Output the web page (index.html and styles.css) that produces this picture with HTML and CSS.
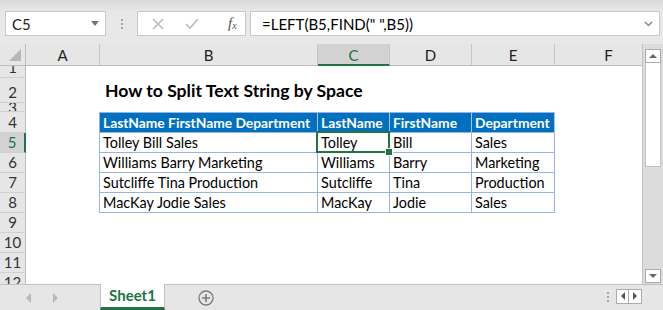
FILE: index.html
```html
<!DOCTYPE html>
<html lang="en">
<head>
    <meta charset="UTF-8">
    <title>How to Split Text String by Space</title>
    <link rel="stylesheet" href="styles.css">
</head>
<body>
    <div class="toolbar">
        <div class="namebox">
            <span>C5</span>
            <span class="caret"></span>
        </div>
        <div class="grip"><i></i><i></i><i></i></div>
        <div class="fxbox">
            <svg width="12" height="12" viewBox="0 0 12 12" class="icon-x">
                <path d="M1 1 L11 11 M11 1 L1 11" stroke="#b8b8b8" stroke-width="1.5" fill="none"/>
            </svg>
            <svg width="14" height="12" viewBox="0 0 14 12" class="icon-check">
                <path d="M1 6 L5 10 L13 1" stroke="#b8b8b8" stroke-width="1.6" fill="none"/>
            </svg>
            <span class="fx">f<sub>x</sub></span>
        </div>
        <div class="formula">
            <span>=LEFT(B5,FIND(" ",B5))</span>
            <svg width="9" height="6" viewBox="0 0 9 6" class="chevron">
                <path d="M1 1 L4.5 4.5 L8 1" stroke="#888" stroke-width="1.5" fill="none"/>
            </svg>
        </div>
    </div>

    <div class="main">
        <div class="sheet">
            <div class="row colhead">
                <div class="rh corner"><span class="tri"></span></div>
                <div class="ch a">A</div>
                <div class="ch b">B</div>
                <div class="ch c active">C</div>
                <div class="ch d">D</div>
                <div class="ch e">E</div>
                <div class="ch f">F</div>
            </div>
            <div class="row r1"><div class="rh">1</div></div>
            <div class="row r2">
                <div class="rh">2</div>
                <div class="cell a"></div>
                <div class="cell b title">How to Split Text String by Space</div>
            </div>
            <div class="row r3"><div class="rh">3</div></div>
            <div class="row r4">
                <div class="rh">4</div>
                <div class="cell a"></div>
                <div class="cell b tb th first">LastName FirstName Department</div>
                <div class="cell c tb th">LastName</div>
                <div class="cell d tb th">FirstName</div>
                <div class="cell e tb th">Department</div>
            </div>
            <div class="row r5">
                <div class="rh active">5</div>
                <div class="cell a"></div>
                <div class="cell b tb first">Tolley Bill Sales</div>
                <div class="cell c tb selected">Tolley</div>
                <div class="cell d tb">Bill</div>
                <div class="cell e tb">Sales</div>
            </div>
            <div class="row r6">
                <div class="rh">6</div>
                <div class="cell a"></div>
                <div class="cell b tb first">Williams Barry Marketing</div>
                <div class="cell c tb">Williams</div>
                <div class="cell d tb">Barry</div>
                <div class="cell e tb">Marketing</div>
            </div>
            <div class="row r7">
                <div class="rh">7</div>
                <div class="cell a"></div>
                <div class="cell b tb first">Sutcliffe Tina Production</div>
                <div class="cell c tb">Sutcliffe</div>
                <div class="cell d tb">Tina</div>
                <div class="cell e tb">Production</div>
            </div>
            <div class="row r8">
                <div class="rh">8</div>
                <div class="cell a"></div>
                <div class="cell b tb first">MacKay Jodie Sales</div>
                <div class="cell c tb">MacKay</div>
                <div class="cell d tb">Jodie</div>
                <div class="cell e tb">Sales</div>
            </div>
            <div class="row r9"><div class="rh">9</div></div>
            <div class="row r10"><div class="rh">10</div></div>
            <div class="row r11"><div class="rh">11</div></div>
            <div class="row r12"><div class="rh">12</div></div>
        </div>

        <div class="vscroll">
            <div class="sbtn"><span class="up"></span></div>
            <div class="thumb"></div>
            <div class="track"></div>
            <div class="sbtn"><span class="down"></span></div>
        </div>
    </div>

    <div class="tabbar">
        <div class="tabnav">
            <span class="left"></span>
            <span class="right"></span>
        </div>
        <div class="tab">Sheet1</div>
        <svg width="16" height="16" viewBox="0 0 16 16" class="addsheet">
            <circle cx="8" cy="8" r="7" stroke="#7a7a7a" stroke-width="1.3" fill="none"/>
            <path d="M8 4 V12 M4 8 H12" stroke="#7a7a7a" stroke-width="1.6"/>
        </svg>
        <div class="spacer"></div>
        <div class="grip small"><i></i><i></i><i></i></div>
        <div class="hnav">
            <div class="nbtn"><span class="left"></span></div>
            <div class="nbtn"><span class="right"></span></div>
        </div>
    </div>
</body>
</html>
```

FILE: styles.css
```css
* {
    box-sizing: border-box;
}

body {
    margin: 0;
    width: 663px;
    height: 310px;
    overflow: hidden;
    background: #e6e6e6;
    font-family: Lato, "Open Sans", sans-serif;
    font-size: 15px;
    color: #000;
}

/* formula bar */
.toolbar {
    height: 44px;
    display: flex;
    align-items: flex-start;
    padding: 11px 0 0 5px;
    background: linear-gradient(#d9d9d9, #e8e8e8 12px, #e8e8e8);
}

.namebox {
    width: 101px;
    height: 25px;
    background: #fff;
    border: 1px solid #c9c9c9;
    display: flex;
    align-items: center;
    justify-content: space-between;
    padding: 0 6px 0 6px;
    color: #222;
}

.caret {
    border-top: 5px solid #777;
    border-left: 4px solid transparent;
    border-right: 4px solid transparent;
}

.grip {
    width: 31px;
    height: 25px;
    display: flex;
    flex-direction: column;
    align-items: center;
    justify-content: center;
    gap: 2px;
}

.grip i {
    display: block;
    width: 2px;
    height: 2px;
    background: #a6a6a6;
}

.fxbox {
    width: 109px;
    height: 25px;
    background: #fff;
    border: 1px solid #c9c9c9;
    display: flex;
    align-items: center;
    padding-left: 14px;
}

.icon-check {
    margin-left: 21px;
}

.fx {
    margin-left: 29px;
    font-family: "Liberation Serif", serif;
    font-style: italic;
    font-size: 15px;
    color: #555;
}

.fx sub {
    font-size: 10px;
    vertical-align: -1px;
}

.formula {
    width: 410px;
    height: 25px;
    margin-left: 4px;
    background: #fff;
    border: 1px solid #c9c9c9;
    display: flex;
    align-items: center;
    justify-content: space-between;
    padding: 0 6px 0 11px;
}

/* grid */
.main {
    display: flex;
    height: 240px;
}

.sheet {
    width: 643px;
    background: #fff;
    border-right: 1px solid #c2c2c2;
    overflow: hidden;
    display: flex;
    flex-direction: column;
}

.row {
    display: flex;
    height: 20px;
    flex: none;
}

.colhead { height: 22px; }
.r1 { height: 12px; }
.r2 { height: 25px; }
.r3 { height: 9px; }
.r4 { height: 21px; }
.r12 { flex: 1; }

.rh {
    width: 26px;
    flex: none;
    background: #e6e6e6;
    border-right: 1px solid #bdbdbd;
    border-bottom: 1px solid #d0d0d0;
    color: #333;
    display: flex;
    justify-content: center;
    align-items: flex-end;
    line-height: 19px;
    overflow: hidden;
}

.r3 .rh,
.r12 .rh {
    align-items: center;
}

.rh.active {
    background: #d2d2d2;
    color: #217346;
    border-right: 2px solid #217346;
}

.a { width: 74px; }
.b { width: 218px; }
.c { width: 72px; }
.d { width: 82px; }
.e { width: 83px; }
.f { width: 108px; }

.ch {
    flex: none;
    background: #e6e6e6;
    border-right: 1px solid #c6c6c6;
    border-bottom: 1px solid #bdbdbd;
    text-align: center;
    line-height: 22px;
    color: #222;
}

.ch.active {
    background: #d2d2d2;
    color: #217346;
    border-bottom: 2px solid #217346;
}

.corner {
    position: relative;
    border-bottom: 1px solid #bdbdbd;
}

.corner .tri {
    position: absolute;
    right: 4px;
    bottom: 4px;
    border-left: 12px solid transparent;
    border-bottom: 12px solid #b7b7b7;
}

.cell {
    flex: none;
    padding: 0 3px;
    white-space: nowrap;
    font-size: 14.4px;
    line-height: 19px;
}

.title {
    overflow: visible;
    font-weight: bold;
    font-size: 17.6px;
    line-height: 25px;
    padding-left: 5px;
}

.tb {
    border-right: 1px solid #95b3e3;
    border-bottom: 1px solid #95b3e3;
}

.tb.first {
    border-left: 1px solid #95b3e3;
    margin-left: -1px;
    width: 219px;
}

.th {
    background: #0070c0;
    color: #fff;
    font-weight: bold;
    font-size: 13.8px;
    border-top: 1px solid #95b3e3;
    border-right-color: #a9c3ea;
}

.selected {
    position: relative;
}

.selected::after {
    content: "";
    position: absolute;
    left: -2px;
    top: -2px;
    right: -1px;
    bottom: -1px;
    border: 2px solid #217346;
}

.selected::before {
    content: "";
    position: absolute;
    right: -4px;
    bottom: -4px;
    width: 6px;
    height: 6px;
    background: #217346;
    border: 1px solid #fff;
    z-index: 1;
}

/* vertical scroll bar */
.vscroll {
    flex: 1;
    display: flex;
    flex-direction: column;
    padding: 5px 2px 1px 2px;
    background: #dcdcdc;
}

.sbtn {
    height: 14px;
    background: #fff;
    border: 1px solid #ababab;
    display: flex;
    align-items: center;
    justify-content: center;
}

.sbtn .up {
    border-bottom: 4px solid #666;
    border-left: 4px solid transparent;
    border-right: 4px solid transparent;
}

.sbtn .down {
    border-top: 4px solid #666;
    border-left: 4px solid transparent;
    border-right: 4px solid transparent;
}

.thumb {
    height: 104px;
    background: #fff;
    border: 1px solid #c2c2c2;
    border-top: none;
}

.track {
    flex: 1;
}

/* sheet tabs */
.tabbar {
    height: 26px;
    display: flex;
    align-items: stretch;
    border-top: 1px solid #c2c2c2;
    background: #e6e6e6;
}

.tabnav {
    width: 100px;
    display: flex;
    align-items: center;
    padding-left: 26px;
    gap: 22px;
}

.left {
    border-right: 5px solid #b8b8b8;
    border-top: 5px solid transparent;
    border-bottom: 5px solid transparent;
}

.right {
    border-left: 5px solid #b8b8b8;
    border-top: 5px solid transparent;
    border-bottom: 5px solid transparent;
}

.tab {
    width: 65px;
    margin-top: -1px;
    background: #fff;
    border: 1px solid #c2c2c2;
    border-top: none;
    border-bottom: 3px solid #217346;
    color: #217346;
    font-weight: bold;
    text-align: center;
    line-height: 22px;
}

.addsheet {
    margin: 5px 0 0 33px;
}

.spacer {
    flex: 1;
}

.grip.small {
    width: 16px;
    height: 24px;
}

.hnav {
    display: flex;
    align-items: center;
    margin-right: 21px;
    padding-bottom: 3px;
}

.nbtn {
    width: 13px;
    height: 15px;
    background: #fff;
    border: 1px solid #ababab;
    display: flex;
    align-items: center;
    justify-content: center;
}

.nbtn + .nbtn {
    border-left: none;
}

.nbtn .left,
.nbtn .right {
    border-width: 4px;
    border-color: transparent;
}

.nbtn .left { border-right-color: #555; border-left-width: 0; }
.nbtn .right { border-left-color: #555; border-right-width: 0; }
```
